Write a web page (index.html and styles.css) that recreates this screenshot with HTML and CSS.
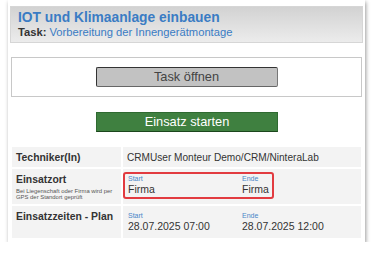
FILE: index.html
```html
<!DOCTYPE html>
<html lang="de">
<head>
    <meta charset="UTF-8">
    <meta name="viewport" content="width=device-width, initial-scale=1.0">
    <title>IOT und Klimaanlage einbauen</title>
    <link rel="stylesheet" href="styles.css">
</head>
<body>

    <div class="panel">
        <div class="task-header">
            <h1 class="task-title">IOT und Klimaanlage einbauen</h1>
            <p class="task-sub"><b>Task:</b> Vorbereitung der Innengerätmontage</p>
        </div>

        <div class="open-box">
            <button class="btn btn-gray" type="button">Task öffnen</button>
        </div>

        <div class="start-row">
            <button class="btn btn-green" type="button">Einsatz starten</button>
        </div>

        <table class="info-table">
            <tr class="row-tech">
                <td class="label">Techniker(In)</td>
                <td class="value">CRMUser Monteur Demo/CRM/NinteraLab</td>
            </tr>
            <tr class="row-ort">
                <td class="label">
                    Einsatzort
                    <span class="hint">Bei Liegenschaft oder Firma wird per GPS der Standort geprüft</span>
                </td>
                <td class="value-pair">
                    <div class="pair pair-marked">
                        <div class="pair-col first">
                            <span class="pair-label">Start</span>
                            <span class="pair-value">Firma</span>
                        </div>
                        <div class="pair-col">
                            <span class="pair-label">Ende</span>
                            <span class="pair-value">Firma</span>
                        </div>
                    </div>
                </td>
            </tr>
            <tr class="row-zeit">
                <td class="label">Einsatzzeiten - Plan</td>
                <td class="value-pair">
                    <div class="pair">
                        <div class="pair-col first">
                            <span class="pair-label">Start</span>
                            <span class="pair-value">28.07.2025 07:00</span>
                        </div>
                        <div class="pair-col">
                            <span class="pair-label">Ende</span>
                            <span class="pair-value">28.07.2025 12:00</span>
                        </div>
                    </div>
                </td>
            </tr>
        </table>
    </div>

</body>
</html>
```

FILE: styles.css
```css
body {
    margin: 0;
    background: #fff;
    font-family: "Liberation Sans", Arial, sans-serif;
    color: #333;
}

.panel {
    width: 353px;
    margin: 0 0 0 8px;
    padding: 6px 2px 2px 2px;
    background: #fff;
    box-shadow: 1px 2px 4px rgba(0, 0, 0, 0.4);
}

.task-header {
    padding: 3px 7px;
    border: 1px solid #d6d6d6;
    background: linear-gradient(#d2d2d2, #ececec);
}

.task-title {
    margin: 0;
    font-size: 13.8px;
    line-height: 16px;
    color: #3a7cc4;
}

.task-sub {
    margin: 0;
    font-size: 11.2px;
    line-height: 13px;
    color: #3a7cc4;
}

.task-sub b {
    color: #333;
}

.open-box {
    margin: 14px 1px 0 1px;
    padding: 9px 0;
    border: 1px solid #c8c8c8;
    text-align: center;
}

.start-row {
    margin-top: 15px;
    text-align: center;
}

.btn {
    display: inline-block;
    width: 182px;
    height: 20px;
    padding: 0;
    font-family: inherit;
    font-size: 12.8px;
    line-height: 18px;
    vertical-align: top;
}

.btn-gray {
    background: #c2c2c2;
    color: #444;
    border: 1px solid #333;
    border-right-color: #777;
    border-bottom-color: #666;
    border-radius: 2px;
}

.btn-green {
    margin-left: 1px;
    background: #3f8040;
    color: #fff;
    border: 1px solid #2f6a31;
    border-bottom-color: #1c461d;
}

.info-table {
    width: 100%;
    margin-top: 13px;
    border-spacing: 2px;
}

.info-table td {
    background: #f3f3f3;
    padding: 0;
    vertical-align: top;
}

.label {
    width: 101px;
    padding: 4px 4px 0 4px !important;
    font-weight: bold;
    font-size: 10.4px;
    line-height: 13px;
}

.row-tech {
    height: 20px;
}

.row-tech td {
    vertical-align: middle !important;
}

.row-tech .label {
    padding-top: 0 !important;
}

.value {
    padding-left: 4px !important;
    font-size: 10.1px;
}

.row-ort {
    height: 35px;
}

.row-zeit {
    height: 32px;
}

.hint {
    display: block;
    margin-top: 2px;
    font-weight: normal;
    font-size: 5.9px;
    line-height: 6px;
    color: #555;
}

.value-pair {
    padding-top: 3px !important;
}

.pair {
    display: flex;
    width: max-content;
    padding: 1px 3px 2px 3px;
    border: 2px solid transparent;
    border-radius: 3px;
}

.pair-marked {
    border-color: #e23b40;
}

.pair-col {
    display: flex;
    flex-direction: column;
}

.pair-col.first {
    width: 114px;
}

.pair-label {
    font-size: 7px;
    line-height: 8px;
    color: #4a86c8;
}

.pair-value {
    font-size: 10.5px;
    line-height: 12px;
}
```
